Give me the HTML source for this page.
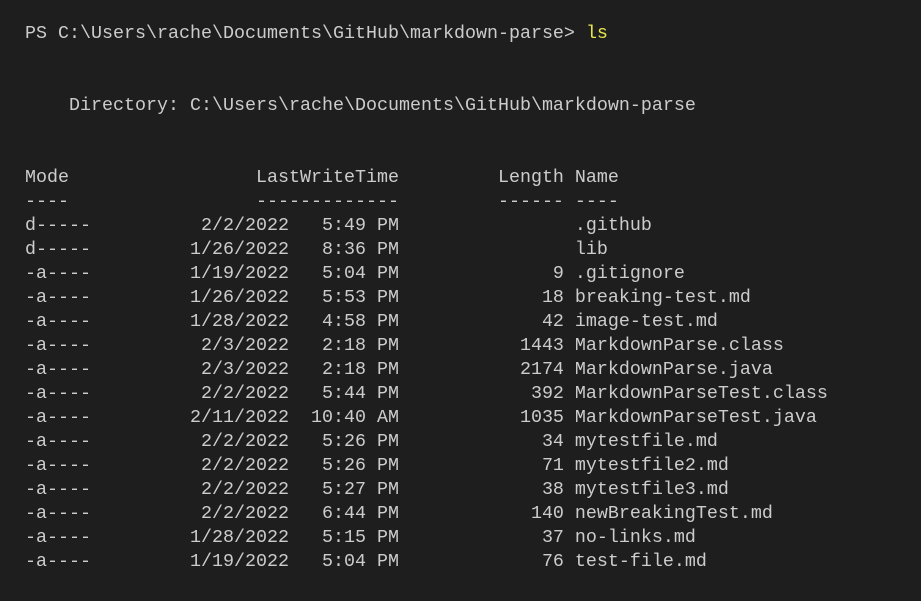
<!DOCTYPE html>
<html><head><meta charset="utf-8"><style>
html,body{margin:0;padding:0;background:#1e1e1e;width:921px;height:601px;overflow:hidden}
pre{margin:0;position:absolute;left:25px;top:22px;font-family:"Liberation Mono",monospace;font-size:18.33px;line-height:24px;color:#cccccc}
.y{color:#e5e550}
</style></head><body><pre>PS C:\Users\rache\Documents\GitHub\markdown-parse&gt; <span class="y">ls</span>


    Directory: C:\Users\rache\Documents\GitHub\markdown-parse


Mode                 LastWriteTime         Length Name
----                 -------------         ------ ----
d-----          2/2/2022   5:49 PM                .github
d-----         1/26/2022   8:36 PM                lib
-a----         1/19/2022   5:04 PM              9 .gitignore
-a----         1/26/2022   5:53 PM             18 breaking-test.md
-a----         1/28/2022   4:58 PM             42 image-test.md
-a----          2/3/2022   2:18 PM           1443 MarkdownParse.class
-a----          2/3/2022   2:18 PM           2174 MarkdownParse.java
-a----          2/2/2022   5:44 PM            392 MarkdownParseTest.class
-a----         2/11/2022  10:40 AM           1035 MarkdownParseTest.java
-a----          2/2/2022   5:26 PM             34 mytestfile.md
-a----          2/2/2022   5:26 PM             71 mytestfile2.md
-a----          2/2/2022   5:27 PM             38 mytestfile3.md
-a----          2/2/2022   6:44 PM            140 newBreakingTest.md
-a----         1/28/2022   5:15 PM             37 no-links.md
-a----         1/19/2022   5:04 PM             76 test-file.md
</pre></body></html>
